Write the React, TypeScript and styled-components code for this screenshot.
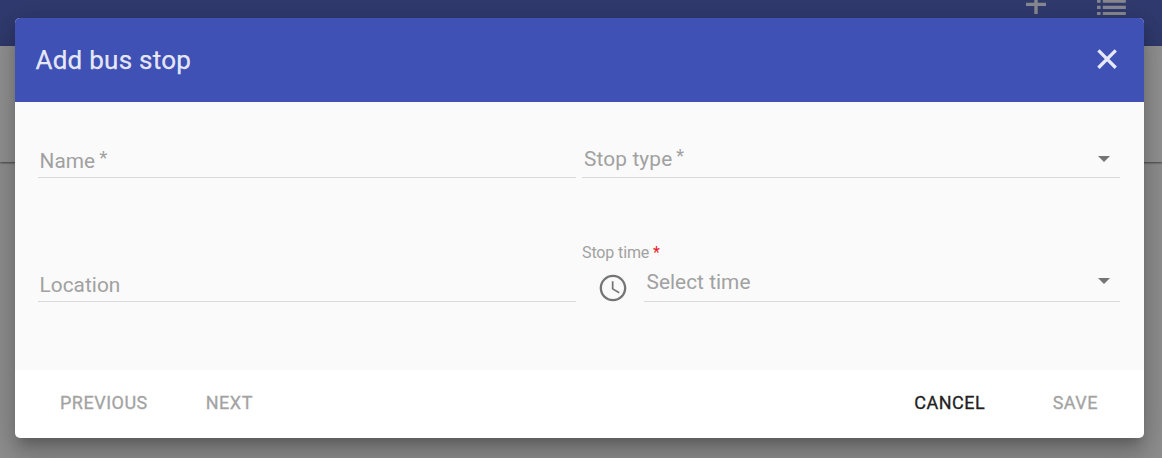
import React from 'react';
import styled, { createGlobalStyle } from 'styled-components';

const GlobalStyle = createGlobalStyle`
  *, *::before, *::after { box-sizing: border-box; }
  body {
    margin: 0;
    overflow: hidden;
    font-family: Roboto, 'Liberation Sans', sans-serif;
    background: #fafafa;
  }
`;

const Page = styled.div`
  position: relative;
  height: 458px;
  overflow: hidden;
  background: #f4f4f4;
`;

const Toolbar = styled.header`
  display: flex;
  justify-content: flex-end;
  gap: 50px;
  height: 46px;
  padding-right: 36px;
  background: #3f51b5;
`;

const Panel = styled.section`
  height: 116px;
  background: #fafafa;
  box-shadow: 0 1px 2px rgba(0, 0, 0, 0.6);
`;

const Overlay = styled.div`
  position: absolute;
  inset: 0;
  display: flex;
  padding: 18px 18px 20px 15px;
  background: rgba(33, 33, 33, 0.48);
`;

const Dialog = styled.div`
  display: flex;
  flex: 1;
  flex-direction: column;
  border-radius: 5px;
  background: #fff;
  box-shadow:
    0 9px 10px -5px rgba(0, 0, 0, 0.2),
    0 17px 25px 3px rgba(0, 0, 0, 0.14),
    0 6px 31px 5px rgba(0, 0, 0, 0.12);
`;

const DialogHeader = styled.div`
  display: flex;
  align-items: center;
  justify-content: space-between;
  height: 84px;
  padding: 0 20.5px 0 20.5px;
  border-radius: 5px 5px 0 0;
  color: rgba(255, 255, 255, 0.87);
  background: #3f51b5;
`;

const Title = styled.h2`
  margin: 0;
  font-size: 26px;
  font-weight: 400;
  letter-spacing: 0.25px;
  -webkit-text-stroke: 0.25px currentColor;
`;

const CloseButton = styled.button`
  display: flex;
  padding: 0 0 2px;
  border: 0;
  color: inherit;
  background: none;
`;

const Form = styled.div`
  display: grid;
  grid-template-columns: 1fr 1fr;
  grid-template-rows: 76px 124px;
  column-gap: 6px;
  flex: 1;
  padding: 0 24px 0 23px;
  background: #fafafa;
`;

const Field = styled.div<{ $lift: number; $inset?: number; $track?: number }>`
  display: flex;
  flex: 1;
  align-items: flex-end;
  justify-content: space-between;
  align-self: end;
  height: 40px;
  padding: 0 2px ${(p) => p.$lift}px ${(p) => p.$inset ?? 1.5}px;
  border-bottom: 1px solid #d9d9d9;
  color: #a1a1a1;
  font-size: 20.8px;
  line-height: 24px;
  letter-spacing: ${(p) => p.$track ?? 0.05}px;
`;

const Star = styled.span<{ $size: number; $rise: number }>`
  font-size: ${(p) => p.$size}px;
  line-height: 0;
  margin-left: 4px;
  vertical-align: ${(p) => p.$rise}px;
`;

const Arrow = styled.span<{ $drop: number }>`
  margin: 0 8px ${(p) => p.$drop}px 0;
  border: 6.5px solid transparent;
  border-top-color: #757575;
  border-bottom: 0;
`;

const TimeField = styled.div`
  display: flex;
  flex-direction: column;
  justify-content: flex-end;
`;

const TimeLabel = styled.label`
  font-size: 16px;
  line-height: 18px;
  letter-spacing: -0.12px;
  color: #a1a1a1;
`;

const Required = styled.span`
  color: #e8202a;
`;

const TimeRow = styled.div`
  display: flex;
  align-items: flex-end;
`;

const Clock = styled.svg`
  margin: 0 15px -2px;
`;

const Actions = styled.div`
  display: flex;
  align-items: center;
  height: 68px;
  padding: 0 46px 3px 45px;
`;

const Spacer = styled.div`
  flex: 1;
`;

const Action = styled.button<{ $active?: boolean; $gap?: number }>`
  margin: 0 ${(p) => p.$gap ?? 0}px 0 0;
  padding: 0;
  border: 0;
  background: none;
  font: 400 18px/20px Roboto, 'Liberation Sans', sans-serif;
  letter-spacing: 0.5px;
  -webkit-text-stroke: 0.3px currentColor;
  color: ${(p) => (p.$active ? '#212121' : '#a3a3a3')};
`;

export default function App() {
  return (
    <>
      <GlobalStyle />
      <Page>
        <Toolbar>
          <svg width="20" height="16" viewBox="0 0 20 16" fill="#fff" fillOpacity="0.87">
            <path d="M0 2.700h8.300V0h3.400v2.700H20v3.300h-8.300V14H8.300V6H0z" />
          </svg>
          <svg width="30" height="16" viewBox="0 0 30 16" fill="#fff" fillOpacity="0.87">
            <path d="M1 0h3.600v2.700H1zM6.800 0h23v2.700h-23zM1 5.800h3.600v3.100H1zM6.800 5.800h23v3.100h-23zM1 12h3.600v3H1zM6.800 12h23v3h-23z" />
          </svg>
        </Toolbar>
        <Panel />
        <Overlay>
          <Dialog>
            <DialogHeader>
              <Title>Add bus stop</Title>
              <CloseButton aria-label="Close">
                <svg width="33" height="33" viewBox="0 0 24 24" fill="none" stroke="currentColor" strokeWidth="2.400">
                  <path d="M5.400 5.400L18 18M18 5.400L5.400 18" />
                </svg>
              </CloseButton>
            </DialogHeader>
            <Form>
              <Field $lift={4}>
                <span>Name<Star $size={19} $rise={4}>*</Star></span>
              </Field>
              <Field $lift={6} $inset={2} $track={0.15}>
                <span>Stop type<Star $size={18} $rise={4.5}>*</Star></span>
                <Arrow $drop={9} />
              </Field>
              <Field $lift={4}>
                <span>Location</span>
              </Field>
              <TimeField>
                <TimeLabel>
                  Stop time <Required>*</Required>
                </TimeLabel>
                <TimeRow>
                  <Clock width="32" height="32" viewBox="0 0 24 24" fill="#757575">
                    <path d="M11.990 2C6.470 2 2 6.480 2 12s4.470 10 9.990 10C17.520 22 22 17.520 22 12S17.520 2 11.990 2zM12 20.250c-4.560 0-8.250-3.690-8.250-8.250s3.690-8.250 8.250-8.250 8.250 3.690 8.250 8.250-3.690 8.250-8.250 8.250z" />
                    <path d="M12.400 7H11.100v6l5.250 3.150.65-1.130-4.600-2.720z" />
                  </Clock>
                  <Field $lift={7} $inset={2.5} $track={0.05}>
                    <span>Select time</span>
                    <Arrow $drop={10} />
                  </Field>
                </TimeRow>
              </TimeField>
            </Form>
            <Actions>
              <Action $gap={58}>PREVIOUS</Action>
              <Action>NEXT</Action>
              <Spacer />
              <Action $active $gap={67.5}>CANCEL</Action>
              <Action>SAVE</Action>
            </Actions>
          </Dialog>
        </Overlay>
      </Page>
    </>
  );
}
